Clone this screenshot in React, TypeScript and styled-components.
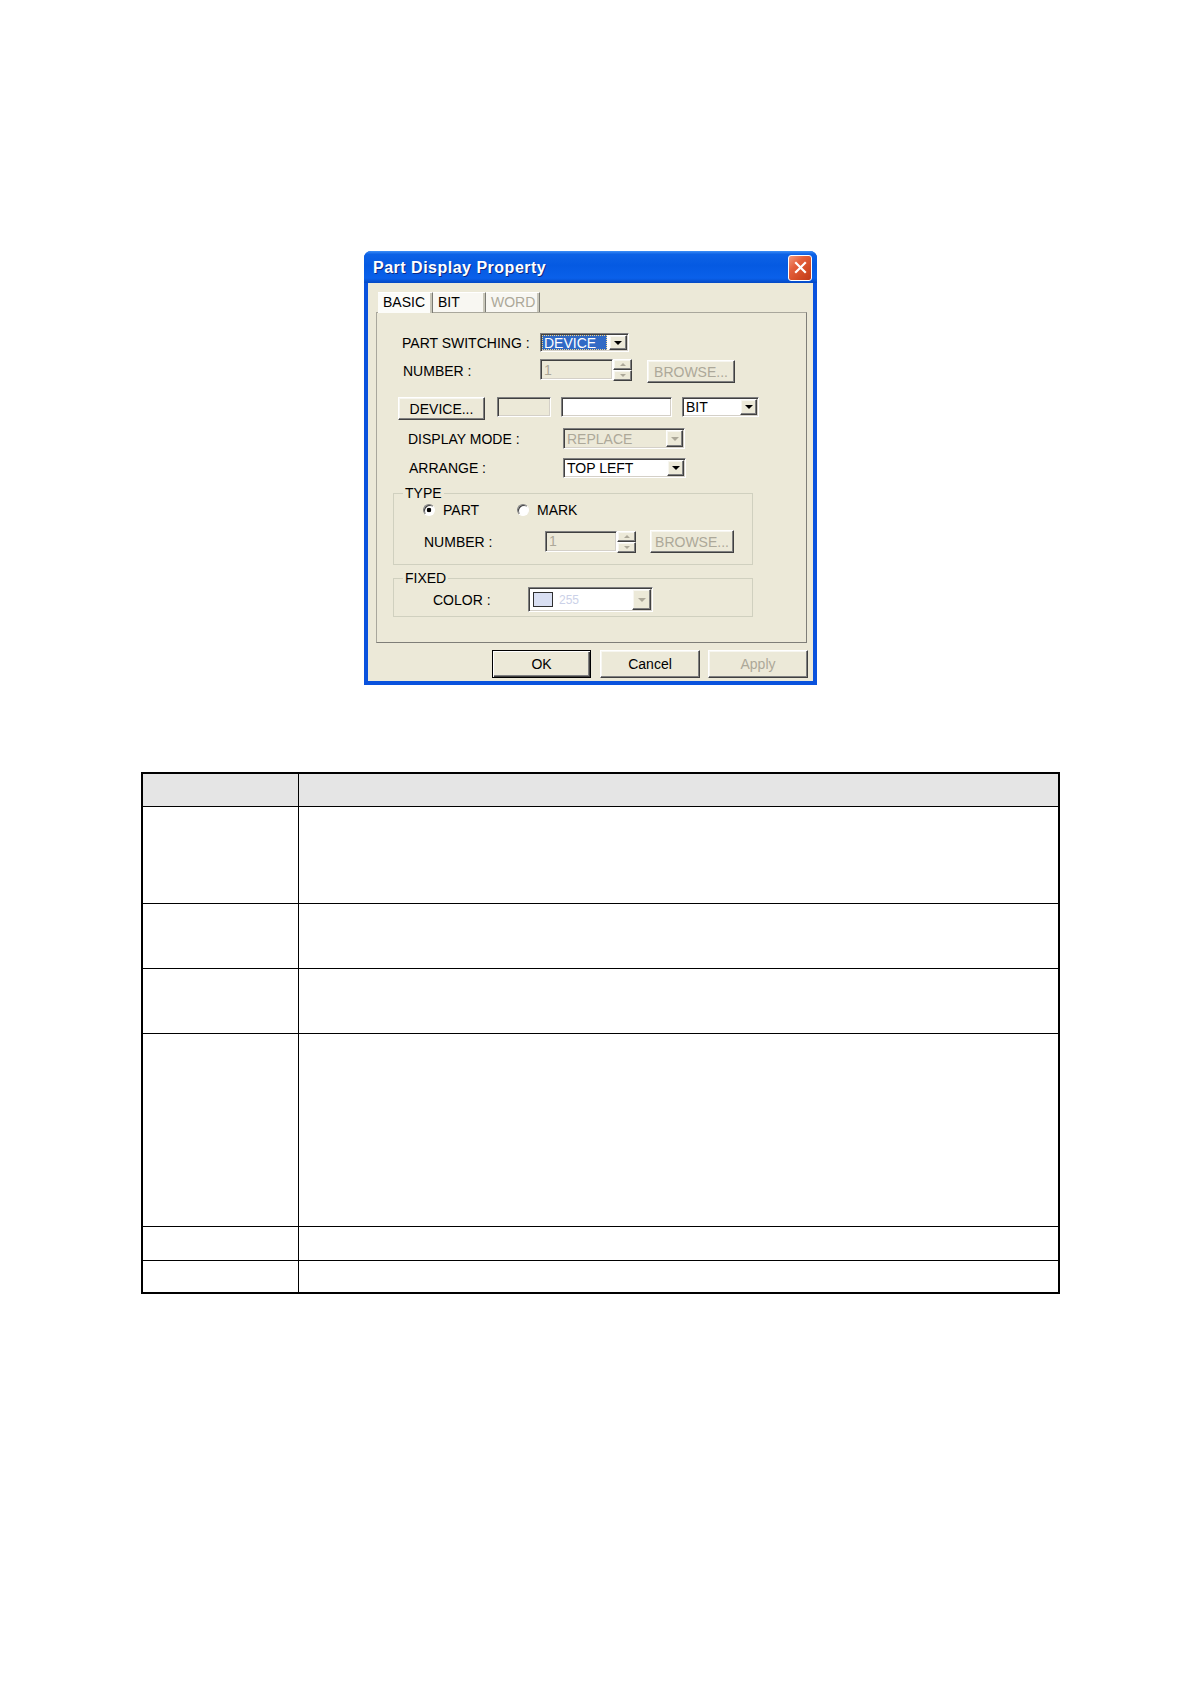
import React from "react";
import styled, { createGlobalStyle, css } from "styled-components";

const GlobalStyle = createGlobalStyle`
  html, body { margin: 0; padding: 0; background: #ffffff; }
  body { font-family: "Liberation Sans", Arial, sans-serif; }
  * { box-sizing: border-box; }
`;

const sunken = css`
  border: 1px solid;
  border-color: #808080 #ffffff #ffffff #808080;
  box-shadow: inset 1px 1px 0 #404040, inset -1px -1px 0 #d4d0c8;
`;

const raised = css`
  border: 1px solid;
  border-color: #ffffff #404040 #404040 #ffffff;
  box-shadow: inset -1px -1px 0 #808080, inset 1px 1px 0 #f7f6f0;
  background: #ece9d8;
`;

const Page = styled.div`
  width: 1191px;
  min-height: 1684px;
  padding-top: 251px;
  display: flex;
  flex-direction: column;
`;

/* ---------- dialog window ---------- */
const Window = styled.div`
  margin-left: 364px;
  width: 453px;
  height: 434px;
  display: flex;
  flex-direction: column;
  border-radius: 7px 7px 0 0;
  overflow: hidden;
  background: #0a4fd8;
`;

const TitleBar = styled.div`
  height: 32px;
  flex-shrink: 0;
  display: flex;
  align-items: center;
  justify-content: space-between;
  padding: 1px 5px 0 9px;
  background: linear-gradient(
    to bottom,
    #3d8ff7 0%,
    #0d62e6 10%,
    #055ae2 45%,
    #0a60ea 85%,
    #0449c4 100%
  );
`;

const TitleText = styled.span`
  font-family: "Liberation Sans", Arial, sans-serif;
  font-weight: bold;
  font-size: 16px;
  color: #ffffff;
  text-shadow: 1px 1px 0 #0b2a86;
  letter-spacing: 0.5px;
`;

const CloseButton = styled.span`
  width: 24px;
  height: 26px;
  border: 1px solid #ffffff;
  border-radius: 3px;
  display: flex;
  align-items: center;
  justify-content: center;
  background: linear-gradient(135deg, #f39a7c 0%, #e4603c 35%, #d24a24 70%, #c0391a 100%);
`;

const Client = styled.div`
  flex: 1;
  display: flex;
  flex-direction: column;
  background: #ece9d8;
  border: 4px solid #0a52dd;
  border-top: 0;
  padding: 9px 6px 3px 8px;
`;

/* ---------- tabs ---------- */
const TabStrip = styled.div`
  display: flex;
  height: 20px;
  padding-left: 2px;
  position: relative;
  z-index: 1;
`;

const Tab = styled.div<{ $active?: boolean; $disabled?: boolean; $w: number }>`
  width: ${(p) => p.$w}px;
  height: ${(p) => (p.$active ? 21 : 20)}px;
  display: flex;
  align-items: center;
  padding-left: 5px;
  padding-bottom: ${(p) => (p.$active ? 2 : 1)}px;
  font-size: 14px;
  color: ${(p) => (p.$disabled ? "#aca899" : "#000000")};
  background: ${(p) => (p.$active ? "#fcfcf9" : "#f8f7f2")};
  border-top: 1px solid #ffffff;
  border-right: 1px solid #7b7b74;
  box-shadow: inset -2px 0 0 #c9c7ba;
`;

const Panel = styled.div`
  width: 431px;
  height: 331px;
  flex-shrink: 0;
  border: 1px solid;
  border-color: #a9a79c #7f7e78 #7f7e78 #a9a79c;
  background: #ece9d8;
  display: flex;
  flex-direction: column;
  padding-top: 20px;
`;

const Row = styled.div<{ $mt?: number; $h: number; $pl: number; $align?: string }>`
  display: flex;
  align-items: ${(p) => p.$align ?? "center"};
  height: ${(p) => p.$h}px;
  margin-top: ${(p) => p.$mt ?? 0}px;
  padding-left: ${(p) => p.$pl}px;
  flex-shrink: 0;
`;

const Label = styled.span<{ $w?: number }>`
  width: ${(p) => (p.$w ? `${p.$w}px` : "auto")};
  flex-shrink: 0;
  font-size: 14px;
  line-height: 16px;
  color: #000000;
  white-space: nowrap;
`;

const Spacer = styled.span<{ $w: number }>`
  width: ${(p) => p.$w}px;
  flex-shrink: 0;
`;

/* ---------- controls ---------- */
const Combo = styled.div<{ $w: number; $h: number; $bg?: string }>`
  ${sunken};
  width: ${(p) => p.$w}px;
  height: ${(p) => p.$h}px;
  padding: 1px;
  display: flex;
  align-items: stretch;
  flex-shrink: 0;
  background: ${(p) => p.$bg ?? "#ffffff"};
`;

const ComboText = styled.span<{ $color?: string; $size?: number }>`
  flex: 1;
  display: flex;
  align-items: center;
  padding-left: 2px;
  font-size: ${(p) => p.$size ?? 14}px;
  color: ${(p) => p.$color ?? "#000000"};
  white-space: nowrap;
  overflow: hidden;
`;

const Selection = styled.span`
  flex: 1;
  display: flex;
  align-items: center;
  padding-left: 2px;
  margin-right: 2px;
  font-size: 14px;
  color: #ffffff;
  background: #316ac5;
  outline: 1px dotted #f2d48a;
  outline-offset: -1px;
  white-space: nowrap;
`;

const DropBtn = styled.span<{ $w?: number }>`
  ${raised};
  width: ${(p) => p.$w ?? 17}px;
  flex-shrink: 0;
  display: flex;
  align-items: center;
  justify-content: center;
`;

const Arrow = styled.span<{ $disabled?: boolean }>`
  width: 0;
  height: 0;
  border-left: 4px solid transparent;
  border-right: 4px solid transparent;
  border-top: 4px solid ${(p) => (p.$disabled ? "#aca899" : "#000000")};
`;

const Field = styled.div<{ $w: number; $h: number; $bg?: string; $color?: string }>`
  ${sunken};
  width: ${(p) => p.$w}px;
  height: ${(p) => p.$h}px;
  flex-shrink: 0;
  display: flex;
  align-items: center;
  padding-left: 3px;
  font-size: 14px;
  color: ${(p) => p.$color ?? "#000000"};
  background: ${(p) => p.$bg ?? "#ffffff"};
`;

const Spinner = styled.div`
  display: flex;
  flex-shrink: 0;
  align-items: flex-start;
`;

const SpinCol = styled.div`
  width: 19px;
  height: 22px;
  display: flex;
  flex-direction: column;
`;

const SpinBtn = styled.span`
  ${raised};
  flex: 1;
  display: flex;
  align-items: center;
  justify-content: center;
`;

const SmallArrow = styled.span<{ $up?: boolean }>`
  width: 0;
  height: 0;
  border-left: 3px solid transparent;
  border-right: 3px solid transparent;
  ${(p) =>
    p.$up
      ? "border-bottom: 3px solid #aca899;"
      : "border-top: 3px solid #aca899;"}
`;

const Btn = styled.button<{ $w: number; $h: number; $default?: boolean; $disabled?: boolean; $mt?: number; $ml?: number }>`
  ${raised};
  width: ${(p) => p.$w}px;
  height: ${(p) => p.$h}px;
  margin-top: ${(p) => p.$mt ?? 0}px;
  margin-left: ${(p) => p.$ml ?? 0}px;
  flex-shrink: 0;
  padding: 0;
  font-family: "Liberation Sans", Arial, sans-serif;
  font-size: 14px;
  color: ${(p) => (p.$disabled ? "#aca899" : "#000000")};
  cursor: default;
  ${(p) =>
    p.$default &&
    css`
      border: 1px solid #000000;
      box-shadow: inset 1px 1px 0 #ffffff, inset -1px -1px 0 #404040,
        inset -2px -2px 0 #808080;
    `}
`;

const Group = styled.fieldset<{ $mt: number }>`
  margin: ${(p) => p.$mt}px 0 0 16px;
  padding: 0;
  width: 360px;
  min-width: 0;
  border: 1px solid #d0d0bf;
  flex-shrink: 0;
  display: flex;
  flex-direction: column;
`;

const Legend = styled.legend`
  margin-left: 9px;
  padding: 0 2px;
  font-size: 14px;
  line-height: 16px;
  color: #000000;
`;

const GroupRow = styled.div<{ $mt: number; $h: number; $pl: number; $mb?: number }>`
  display: flex;
  align-items: center;
  height: ${(p) => p.$h}px;
  margin-top: ${(p) => p.$mt}px;
  margin-bottom: ${(p) => p.$mb ?? 0}px;
  padding-left: ${(p) => p.$pl}px;
`;

const RadioOption = styled.label<{ $w?: number }>`
  display: flex;
  align-items: center;
  gap: 8px;
  width: ${(p) => (p.$w ? `${p.$w}px` : "auto")};
  font-size: 14px;
  color: #000000;
`;

const RadioDot = styled.span<{ $checked?: boolean }>`
  width: 12px;
  height: 12px;
  border-radius: 50%;
  flex-shrink: 0;
  border: 1px solid;
  border-color: #808080 #ffffff #ffffff #808080;
  box-shadow: inset 1px 1px 0 #404040;
  background: ${(p) =>
    p.$checked
      ? "radial-gradient(circle, #000000 0 2px, #ffffff 2.6px)"
      : "#ffffff"};
`;

const Swatch = styled.span`
  width: 20px;
  height: 15px;
  margin-left: 3px;
  align-self: center;
  flex-shrink: 0;
  border: 1px solid #2f2f2f;
  background: #d9dff2;
`;

const ButtonRow = styled.div`
  display: flex;
  justify-content: flex-end;
  width: 432px;
  margin-top: 7px;
  gap: 8px;
`;

/* ---------- table ---------- */
const Table = styled.div`
  margin-left: 141px;
  margin-top: 87px;
  width: 919px;
  border: 2px solid #000000;
  display: flex;
  flex-direction: column;
`;

const TRow = styled.div<{ $h: number; $header?: boolean; $last?: boolean }>`
  display: grid;
  grid-template-columns: 156px 1fr;
  height: ${(p) => p.$h}px;
  background: ${(p) => (p.$header ? "#e5e5e5" : "#ffffff")};
  border-bottom: ${(p) => (p.$last ? "0" : "1px solid #000000")};
`;

const TCell = styled.div<{ $first?: boolean }>`
  border-right: ${(p) => (p.$first ? "1px solid #000000" : "0")};
`;

const rows = [
  { h: 33, header: true },
  { h: 97 },
  { h: 65 },
  { h: 65 },
  { h: 193 },
  { h: 34 },
  { h: 31, last: true },
];

function SpinBox({ w, h }: { w: number; h: number }) {
  return (
    <Spinner>
      <Field $w={w} $h={h} $bg="#ece9d8" $color="#aca899">
        1
      </Field>
      <SpinCol>
        <SpinBtn>
          <SmallArrow $up />
        </SpinBtn>
        <SpinBtn>
          <SmallArrow />
        </SpinBtn>
      </SpinCol>
    </Spinner>
  );
}

export default function App() {
  return (
    <>
      <GlobalStyle />
      <Page>
        <Window>
          <TitleBar>
            <TitleText>Part Display Property</TitleText>
            <CloseButton>
              <svg width="13" height="13" viewBox="0 0 13 13">
                <path
                  d="M2 2 L11 11 M11 2 L2 11"
                  stroke="#ffffff"
                  strokeWidth="2.2"
                  strokeLinecap="square"
                />
              </svg>
            </CloseButton>
          </TitleBar>
          <Client>
            <TabStrip>
              <Tab $w={55} $active>
                BASIC
              </Tab>
              <Tab $w={53}>BIT</Tab>
              <Tab $w={54} $disabled>
                WORD
              </Tab>
            </TabStrip>
            <Panel>
              <Row $h={19} $pl={25}>
                <Label $w={138}>PART SWITCHING :</Label>
                <Combo $w={89} $h={19}>
                  <Selection>DEVICE</Selection>
                  <DropBtn $w={18}>
                    <Arrow />
                  </DropBtn>
                </Combo>
              </Row>
              <Row $mt={7} $h={24} $pl={26} $align="flex-start">
                <Label $w={137} style={{ alignSelf: "center" }}>
                  NUMBER :
                </Label>
                <SpinBox w={73} h={21} />
                <Btn $w={88} $h={23} $ml={15} $mt={1} $disabled>
                  BROWSE...
                </Btn>
              </Row>
              <Row $mt={14} $h={23} $pl={21} $align="flex-start">
                <Btn $w={87} $h={23}>
                  DEVICE...
                </Btn>
                <Spacer $w={12} />
                <Field $w={54} $h={20} $bg="#ece9d8" />
                <Spacer $w={10} />
                <Field $w={111} $h={20} />
                <Spacer $w={10} />
                <Combo $w={77} $h={20}>
                  <ComboText>BIT</ComboText>
                  <DropBtn>
                    <Arrow />
                  </DropBtn>
                </Combo>
              </Row>
              <Row $mt={8} $h={21} $pl={31}>
                <Label $w={155}>DISPLAY MODE :</Label>
                <Combo $w={122} $h={21} $bg="#ece9d8">
                  <ComboText $color="#aca899">REPLACE</ComboText>
                  <DropBtn>
                    <Arrow $disabled />
                  </DropBtn>
                </Combo>
              </Row>
              <Row $mt={9} $h={20} $pl={32}>
                <Label $w={154}>ARRANGE :</Label>
                <Combo $w={123} $h={20}>
                  <ComboText>TOP LEFT</ComboText>
                  <DropBtn>
                    <Arrow />
                  </DropBtn>
                </Combo>
              </Row>
              <Group $mt={7}>
                <Legend>TYPE</Legend>
                <GroupRow $mt={1} $h={16} $pl={29}>
                  <RadioOption $w={94}>
                    <RadioDot $checked />
                    PART
                  </RadioOption>
                  <RadioOption>
                    <RadioDot />
                    MARK
                  </RadioOption>
                </GroupRow>
                <GroupRow $mt={12} $h={23} $pl={30} $mb={11}>
                  <Label $w={121}>NUMBER :</Label>
                  <SpinBox w={72} h={21} />
                  <Btn $w={84} $h={23} $ml={14} $disabled>
                    BROWSE...
                  </Btn>
                </GroupRow>
              </Group>
              <Group $mt={5}>
                <Legend>FIXED</Legend>
                <GroupRow $mt={1} $h={25} $pl={39} $mb={4}>
                  <Label $w={95}>COLOR :</Label>
                  <Combo $w={125} $h={25}>
                    <Swatch />
                    <ComboText $color="#cbd1e8" $size={12} style={{ paddingLeft: 6 }}>
                      255
                    </ComboText>
                    <DropBtn $w={19}>
                      <Arrow $disabled />
                    </DropBtn>
                  </Combo>
                </GroupRow>
              </Group>
            </Panel>
            <ButtonRow>
              <Btn $w={99} $h={28} $default style={{ marginRight: 1 }}>
                OK
              </Btn>
              <Btn $w={100} $h={28}>
                Cancel
              </Btn>
              <Btn $w={100} $h={28} $disabled>
                Apply
              </Btn>
            </ButtonRow>
          </Client>
        </Window>

        <Table>
          {rows.map((r, i) => (
            <TRow key={i} $h={r.h} $header={r.header} $last={r.last}>
              <TCell $first />
              <TCell />
            </TRow>
          ))}
        </Table>
      </Page>
    </>
  );
}
